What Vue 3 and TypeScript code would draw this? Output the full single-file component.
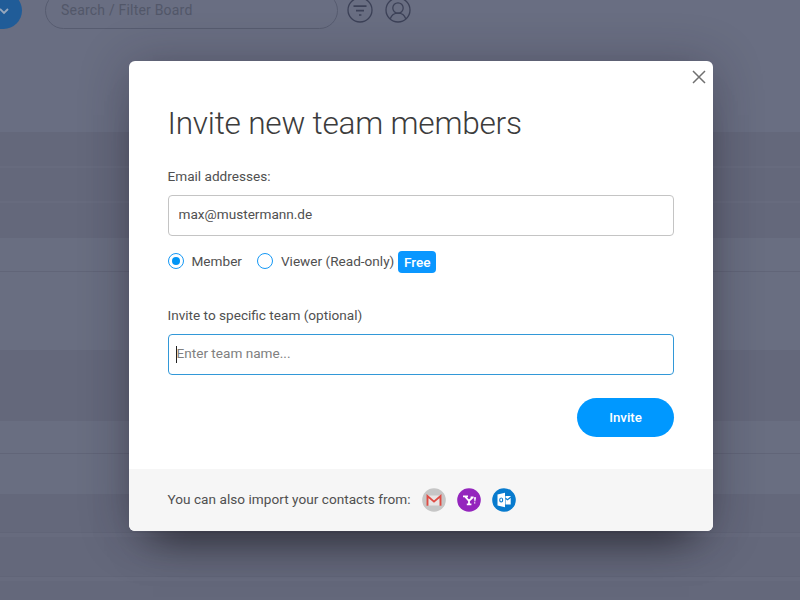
<script setup lang="ts">
import { ref } from 'vue'

type Role = 'member' | 'viewer'

interface BoardRow {
  height: number
  kind: string
}

const emails = ref('max@mustermann.de')
const team = ref('')
const role = ref<Role>('member')
const roles: { id: Role; label: string; badge?: string }[] = [
  { id: 'member', label: 'Member' },
  { id: 'viewer', label: 'Viewer (Read-only)', badge: 'Free' },
]

const rows: BoardRow[] = [
  { height: 34, kind: 'shade' },
  { height: 2, kind: 'gleam' },
  { height: 33, kind: 'shade' },
  { height: 2, kind: 'gleam' },
  { height: 35, kind: 'shade' },
  { height: 33, kind: 'plain' },
  { height: 1, kind: 'rule' },
  { height: 78, kind: 'plain' },
  { height: 71, kind: 'shade' },
  { height: 32, kind: 'plain' },
  { height: 1, kind: 'rule' },
  { height: 40, kind: 'plain' },
  { height: 38, kind: 'shade' },
  { height: 1, kind: 'rule' },
  { height: 4, kind: 'gleam' },
  { height: 39, kind: 'shade' },
  { height: 1, kind: 'rule' },
  { height: 4, kind: 'gleam' },
  { height: 20, kind: 'shade' },
]
</script>

<template>
  <div class="page">
    <header class="toolbar">
      <button class="add" aria-label="Add">
        <svg width="12" height="8" viewBox="0 0 12 8"><path d="M2 2l4 4 4-4" /></svg>
      </button>
      <div class="search">Search / Filter Board</div>
      <svg class="tool" width="26" height="26" viewBox="0 0 26 26">
        <circle cx="13" cy="13" r="12" />
        <path d="M6.500 9.200h13M9 13.600h8M12 18h2.400" stroke-width="1.700" />
      </svg>
      <svg class="tool person" width="26" height="26" viewBox="0 0 26 26">
        <circle cx="13" cy="13" r="12" />
        <circle cx="13" cy="11" r="5.200" />
        <path d="M5.300 21.800c1.200-3.800 4.100-5.600 7.700-5.600s6.500 1.800 7.700 5.600" />
      </svg>
    </header>
    <div class="board">
      <div v-for="(row, i) in rows" :key="i" :class="row.kind" :style="{ height: row.height + 'px' }"></div>
    </div>

    <section class="modal">
      <button class="close" aria-label="Close">
        <svg width="14" height="14" viewBox="0 0 14 14"><path d="M1 1l12 12M13 1L1 13" /></svg>
      </button>
      <div class="body">
        <h1>Invite new team members</h1>
        <label class="caption email-caption" for="emails">Email addresses:</label>
        <input id="emails" v-model="emails" class="field" type="text" />
        <div class="roles">
          <label v-for="item in roles" :key="item.id" class="role" @click="role = item.id">
            <span class="radio" :class="{ on: role === item.id }"></span>
            <span class="role-text">{{ item.label }}</span>
            <span v-if="item.badge" class="badge">{{ item.badge }}</span>
          </label>
        </div>
        <label class="caption team-caption" for="team">Invite to specific team (optional)</label>
        <div class="team">
          <input id="team" v-model="team" class="field active" type="text" placeholder="Enter team name..." />
          <span class="caret"></span>
        </div>
        <button class="invite">Invite</button>
      </div>
      <footer>
        <span class="import">You can also import your contacts from:</span>
        <svg class="brand" width="24" height="24" viewBox="0 0 24 24">
          <circle cx="12" cy="12" r="11.800" fill="#c6c6c6" />
          <path d="M5 7.500h14v10H5z" fill="#e8e4e4" />
          <path d="M5.500 17.700V8l6.500 5.600L18.500 8v9.700" fill="none" stroke="#de4b43" stroke-width="1.900" />
        </svg>
        <svg class="brand" width="24" height="24" viewBox="0 0 24 24">
          <circle cx="12" cy="12" r="11.800" fill="#9425bd" />
          <path d="M6 8.300h5M8 8.500l4 4.300M15.500 9.500l-3.500 3.300v3.400M9.800 16.300h4.600M13.600 9.400h3" fill="none" stroke="#fff" stroke-width="1.800" />
          <path d="M17 9.300h2.100l-.8 4.200h-.8zM17.100 14.300h1.200v1.300h-1.200z" fill="#fff" />
        </svg>
        <svg class="brand" width="24" height="24" viewBox="0 0 24 24">
          <circle cx="12" cy="12" r="11.800" fill="#087bce" />
          <path d="M5.500 6.500l7.500-1.700v14.400l-7.500-1.700z" fill="#fff" />
          <path d="M13.500 8h5.200v8.500h-5.200z" fill="#fff" />
          <ellipse cx="9.200" cy="12" rx="1.500" ry="2" fill="none" stroke="#087bce" stroke-width="1.100" />
          <path d="M13.500 10.200l2 1.600 3.400-2.800" fill="none" stroke="#087bce" stroke-width="1.200" />
        </svg>
      </footer>
    </section>
  </div>
</template>

<style>
body {
  overflow: hidden;
}
</style>

<style scoped>
* {
  box-sizing: border-box;
}
.page {
  position: relative;
  width: 800px;
  height: 600px;
  overflow: hidden;
  background: #696e82;
  font-family: Roboto, sans-serif;
  font-size: 13.6px;
  color: #505050;
}
button {
  padding: 0;
  border: 0;
  font-family: inherit;
}
.toolbar {
  display: flex;
  align-items: flex-end;
  height: 29px;
}
.add {
  display: flex;
  flex: none;
  align-items: center;
  justify-content: flex-start;
  width: 62px;
  height: 37px;
  margin-left: -40px;
  padding-left: 38px;
  border-radius: 19px;
  background: #205c98;
}
.add path {
  fill: none;
  stroke: #98a8bd;
  stroke-width: 1.8;
}
.search {
  flex: none;
  width: 293px;
  height: 37px;
  margin-left: 23px;
  padding-left: 15px;
  border: 1px solid #575c70;
  border-radius: 19px;
  font-size: 14px;
  line-height: 34px;
  letter-spacing: 0.2px;
  color: #525769;
}
.tool {
  flex: none;
  margin: 0 0 6px 9px;
  fill: none;
  stroke: #3c4157;
  stroke-width: 1.3;
}
.person {
  margin-left: 12px;
}
.board {
  margin-top: 103px;
}
.shade {
  background: #64687b;
}
.plain {
  background: #696e81;
}
.gleam {
  background: #676b7e;
}
.rule {
  background: #616578;
}
.modal {
  position: absolute;
  left: 129px;
  top: 61px;
  width: 584px;
  height: 470px;
  display: flex;
  flex-direction: column;
  border-radius: 6px;
  background: #fff;
  box-shadow: 0 4px 50px rgba(30, 25, 40, 0.32), 0 30px 40px -24px rgba(0, 0, 0, 0.55);
}
.close {
  position: absolute;
  right: 7px;
  top: 9px;
  display: flex;
  background: none;
}
.close path {
  fill: none;
  stroke: #707070;
  stroke-width: 1.5;
}
.body {
  display: flex;
  flex-direction: column;
  height: 408px;
  padding: 43px 39px 0 38.5px;
}
h1 {
  margin: 0;
  font-size: 31.6px;
  font-weight: 300;
  line-height: 40px;
  letter-spacing: -0.23px;
  color: #3c3c3c;
}
.caption {
  line-height: 18px;
}
.email-caption {
  margin-top: 23px;
}
.team-caption {
  margin-top: 33px;
}
.field {
  display: block;
  width: 100%;
  height: 41px;
  margin: 10px 0 0;
  padding: 0 10px 3px;
  border: 1px solid #c4c4c4;
  border-radius: 4px;
  outline: none;
  background: #fff;
  font: inherit;
  color: #505050;
}
.field.active {
  margin: 0;
  padding-left: 8px;
  border-color: #3298d8;
}
.field::placeholder {
  color: #808080;
}
.roles {
  display: flex;
  gap: 15px;
  height: 25px;
  margin-top: 12px;
}
.role {
  display: flex;
  align-items: center;
}
.radio {
  display: flex;
  align-items: center;
  justify-content: center;
  width: 16px;
  height: 16px;
  border: 1px solid #1598f5;
  border-radius: 50%;
}
.radio.on::after {
  content: '';
  width: 8px;
  height: 8px;
  border-radius: 50%;
  background: #0095f6;
}
.role-text {
  margin-left: 8px;
}
.badge {
  width: 38px;
  height: 22px;
  margin: 2px 0 0 4px;
  border-radius: 4px;
  background: #0a97ff;
  font-weight: 500;
  line-height: 22px;
  text-align: center;
  color: #fff;
}
.team {
  position: relative;
  margin-top: 10px;
}
.caret {
  position: absolute;
  left: 8px;
  top: 12px;
  width: 1px;
  height: 17px;
  background: #222;
}
.invite {
  align-self: flex-end;
  width: 97px;
  height: 39px;
  margin-top: 23px;
  border-radius: 20px;
  background: #0098ff;
  font-size: 13.3px;
  font-weight: 500;
  line-height: 39px;
  color: #fff;
}
footer {
  display: flex;
  align-items: center;
  height: 62px;
  padding: 0 38.5px 1px;
  border-radius: 0 0 6px 6px;
  background: #f6f6f6;
}
.import {
  margin-right: 11px;
  padding-bottom: 1px;
  letter-spacing: 0.03px;
}
.brand {
  margin-right: 11px;
}
</style>
